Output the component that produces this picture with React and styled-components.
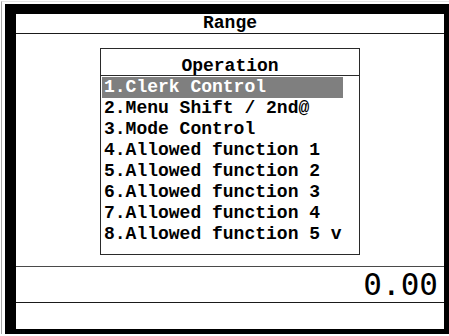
import React from 'react'
import styled, { createGlobalStyle } from 'styled-components'

const GlobalStyle = createGlobalStyle`
    html, body {
        margin: 0;
        padding: 0;
        background: #fff;
    }
`

const menu = [
    '1.Clerk Control',
    '2.Menu Shift / 2nd@',
    '3.Mode Control',
    '4.Allowed function 1',
    '5.Allowed function 2',
    '6.Allowed function 3',
    '7.Allowed function 4',
    '8.Allowed function 5 v',
]

const Bezel = styled.div`
    margin: 1px 0 0 1px;
    border-left: 1px solid #a8a8a8;
    border-top: 1px solid #e4e4e4;
    padding: 2px 0 0 3px;
`

const Frame = styled.div`
    box-sizing: border-box;
    width: 444px;
    height: 330px;
    border-style: solid;
    border-color: #000;
    border-width: 10px 5px 5px 11px;
    background: #fff;
    display: flex;
    flex-direction: column;
    font-family: "Liberation Mono", "Courier New", monospace;
    font-weight: bold;
    color: #000;
`

const Title = styled.div`
    height: 19px;
    line-height: 19px;
    font-size: 18px;
    text-align: center;
    border-bottom: 1px solid #1a1a1a;
`

const Body = styled.div`
    flex: 1;
    display: flex;
    justify-content: center;
    align-items: flex-start;
    padding-top: 14px;
    border-bottom: 1px solid #4a4a4a;
`

const Dialog = styled.div`
    box-sizing: border-box;
    width: 260px;
    height: 207px;
    border: 1px solid #2a2a2a;
    font-size: 18px;
`

const DialogHead = styled.div`
    height: 18px;
    line-height: 18px;
    padding-top: 8px;
    text-align: center;
    border-bottom: 1px solid #2a2a2a;
`

const List = styled.div`
    display: inline-block;
    padding: 1px 0 0 1px;
`

const Item = styled.div`
    height: 21px;
    line-height: 21px;
    padding: 0 1px 0 2px;
    white-space: pre;
    background: ${p => (p.$active ? '#7f7f7f' : 'transparent')};
    color: ${p => (p.$active ? '#fff' : '#000')};
`

const Amount = styled.div`
    height: 35px;
    line-height: 35px;
    padding-right: 6px;
    text-align: right;
    font-family: "DejaVu Sans Mono", monospace;
    font-weight: normal;
    font-size: 31px;
    border-bottom: 1px solid #1a1a1a;
`

const Footer = styled.div`
    height: 26px;
`

export default function App() {
    return (
        <>
            <GlobalStyle />
            <Bezel>
                <Frame>
                    <Title>Range</Title>
                    <Body>
                        <Dialog>
                            <DialogHead>Operation</DialogHead>
                            <List>
                                {menu.map((m, i) => (
                                    <Item key={m} $active={i === 0}>{m}</Item>
                                ))}
                            </List>
                        </Dialog>
                    </Body>
                    <Amount>0.00</Amount>
                    <Footer />
                </Frame>
            </Bezel>
        </>
    )
}
